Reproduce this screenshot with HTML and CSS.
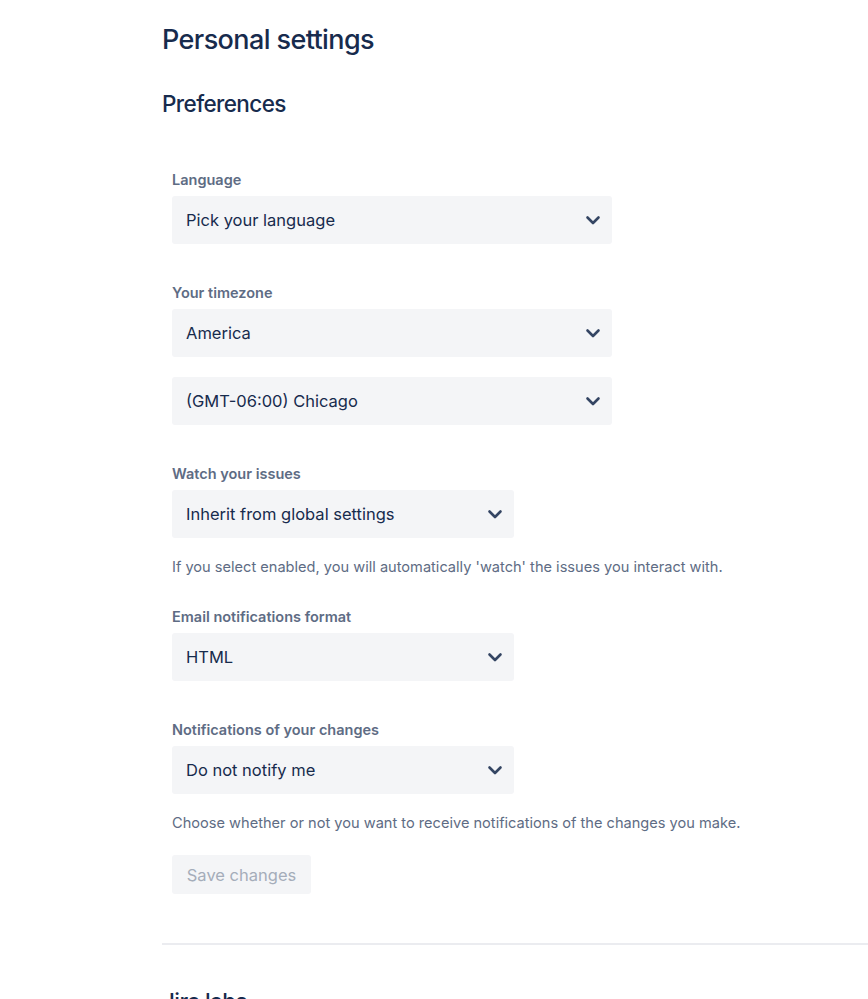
FILE: index.html
```html
<!DOCTYPE html>
<html>
<head>
<meta charset="utf-8">
<link rel="stylesheet" href="styles.css">
</head>
<body>
<main class="page">
  <h1 class="title">Personal settings</h1>
  <h2 class="section-title">Preferences</h2>
  <form class="form">
    <div class="field">
      <label class="label">Language</label>
      <div class="select wide"><span>Pick your language</span><svg class="chev" viewBox="0 0 24 24"><path d="M6.5 9.5 12 15l5.5-5.5" /></svg></div>
    </div>
    <div class="field">
      <label class="label">Your timezone</label>
      <div class="select wide"><span>America</span><svg class="chev" viewBox="0 0 24 24"><path d="M6.5 9.5 12 15l5.5-5.5" /></svg></div>
      <div class="select wide stacked"><span>(GMT-06:00) Chicago</span><svg class="chev" viewBox="0 0 24 24"><path d="M6.5 9.5 12 15l5.5-5.5" /></svg></div>
    </div>
    <div class="field with-help">
      <label class="label">Watch your issues</label>
      <div class="select narrow"><span>Inherit from global settings</span><svg class="chev" viewBox="0 0 24 24"><path d="M6.5 9.5 12 15l5.5-5.5" /></svg></div>
      <p class="help">If you select enabled, you will automatically 'watch' the issues you interact with.</p>
    </div>
    <div class="field">
      <label class="label">Email notifications format</label>
      <div class="select narrow"><span>HTML</span><svg class="chev" viewBox="0 0 24 24"><path d="M6.5 9.5 12 15l5.5-5.5" /></svg></div>
    </div>
    <div class="field last">
      <label class="label">Notifications of your changes</label>
      <div class="select narrow"><span>Do not notify me</span><svg class="chev" viewBox="0 0 24 24"><path d="M6.5 9.5 12 15l5.5-5.5" /></svg></div>
      <p class="help">Choose whether or not you want to receive notifications of the changes you make.</p>
    </div>
    <button type="button" class="save" disabled>Save changes</button>
  </form>
  <hr class="divider">
  <h2 class="section-title labs">Jira labs</h2>
</main>
</body>
</html>
```
FILE: styles.css
```css
html, body {
  margin: 0;
  padding: 0;
  background: #ffffff;
}
body {
  font-family: Inter, "Noto Sans", "Liberation Sans", sans-serif;
  color: #172B4D;
  overflow: hidden;
}
.page {
  padding: 22px 0 0 162px;
}
.title {
  margin: 0;
  font-size: 27px;
  line-height: 36px;
  font-weight: 500;
  letter-spacing: -0.6px;
  color: #172B4D;
}
.section-title {
  margin: 32px 0 0 0;
  font-size: 22.5px;
  line-height: 28px;
  font-weight: 500;
  letter-spacing: -0.6px;
  color: #172B4D;
}
.form {
  padding: 53px 0 0 10px;
  display: flex;
  flex-direction: column;
}
.field {
  display: flex;
  flex-direction: column;
  margin-bottom: 40px;
}
.field.with-help { margin-bottom: 32px; }
.field.last { margin-bottom: 23px; }
.label {
  font-size: 14.5px;
  line-height: 18px;
  font-weight: 600;
  color: #5E6C84;
  margin-bottom: 7px;
}
.select {
  box-sizing: border-box;
  height: 48px;
  background: #F4F5F7;
  border-radius: 3px;
  display: flex;
  align-items: center;
  justify-content: space-between;
  padding: 0 7px 0 14px;
  font-size: 16.5px;
  color: #172B4D;
}
.wide { width: 440px; }
.narrow { width: 342px; }
.stacked { margin-top: 20px; }
.chev {
  width: 24px;
  height: 24px;
  fill: none;
  stroke: #344563;
  stroke-width: 2.6;
  stroke-linecap: round;
  stroke-linejoin: round;
}
.help {
  margin: 20px 0 0 0;
  font-size: 14.6px;
  line-height: 18px;
  color: #5E6C84;
}
.save {
  align-self: flex-start;
  width: 139px;
  height: 39px;
  border: none;
  border-radius: 3px;
  background: #F4F5F7;
  color: #A5ADBA;
  font-family: inherit;
  font-size: 16.5px;
  padding: 0;
}
.divider {
  margin: 49px 0 0 0;
  border: none;
  height: 2px;
  background: #EBECF0;
}
.labs {
  margin-top: 43px;
}
```
